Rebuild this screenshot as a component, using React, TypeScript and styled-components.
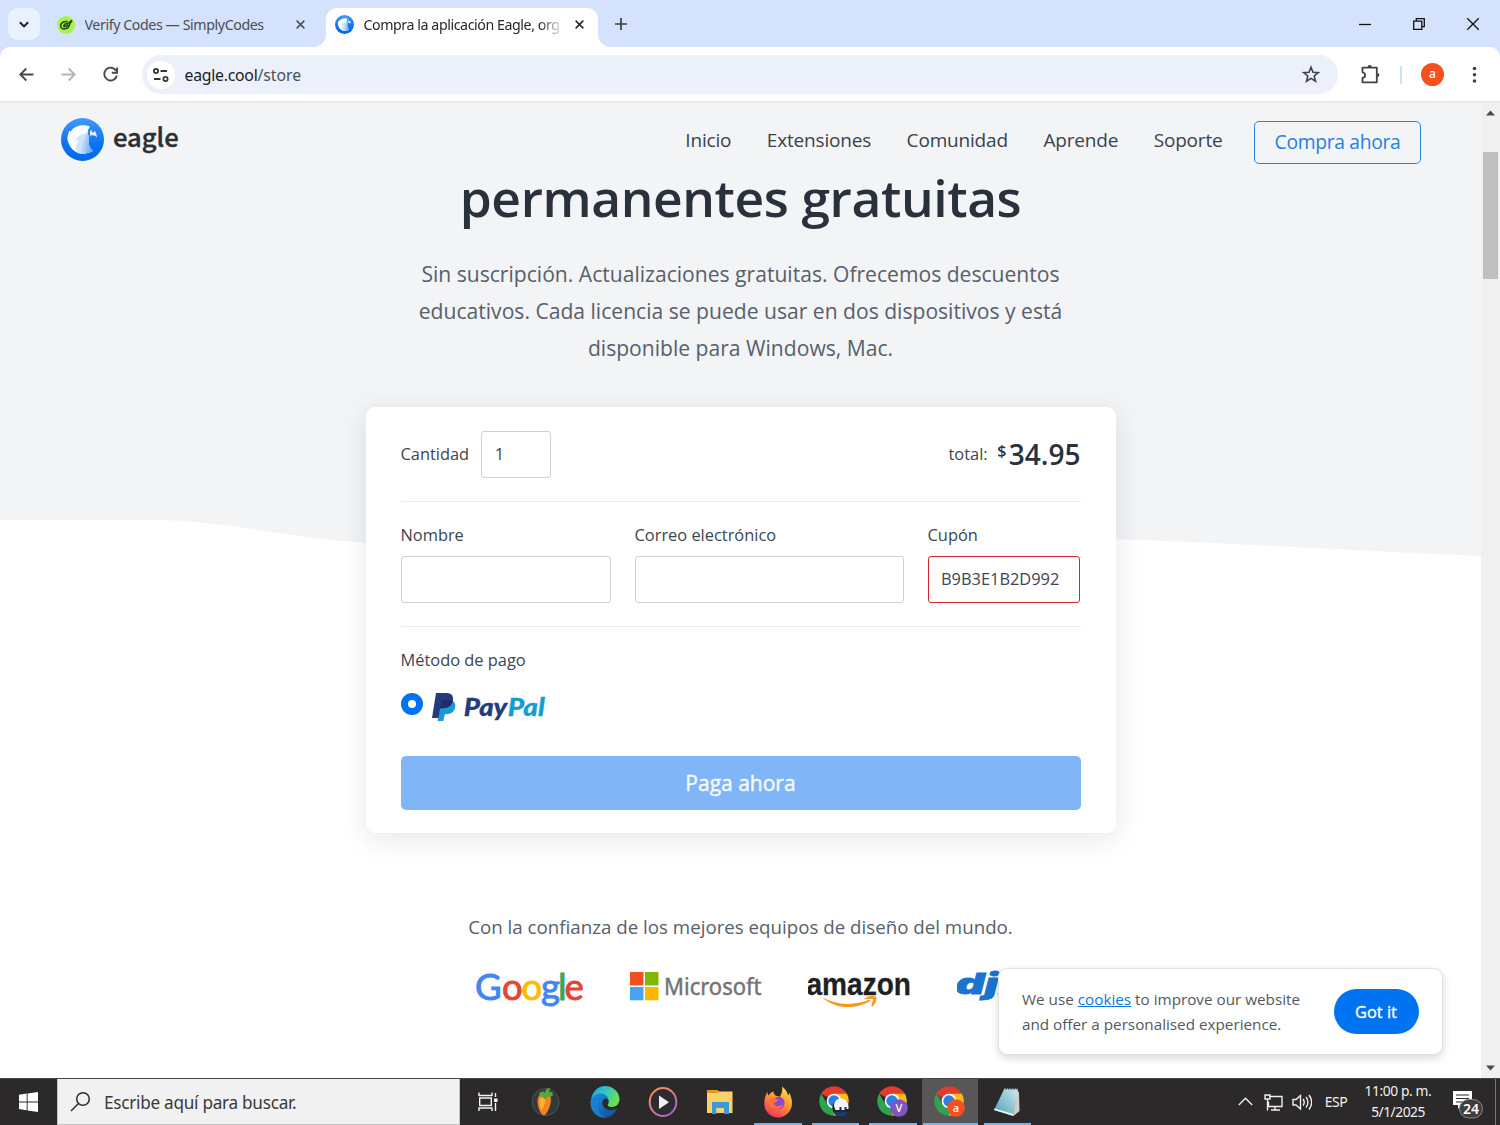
import React from "react";
import styled, { createGlobalStyle } from "styled-components";

const ui = `"Noto Sans", "Open Sans", sans-serif`;
const web = `"Open Sans", "Noto Sans", sans-serif`;

const Global = createGlobalStyle`
  * { box-sizing: border-box; }
  body { margin: 0; overflow: hidden; background: #fff; }
  svg { display: block; flex: none; }
  a { color: inherit; }
`;

const Screen = styled.div`
  width: 1500px;
  height: 1125px;
  display: flex;
  flex-direction: column;
  overflow: hidden;
  font-family: ${web};
`;

const Label = styled.span<{
  $size: number;
  $color?: string;
  $weight?: number;
  $track?: number;
  $ui?: boolean;
  $thicken?: number;
}>`
  font-family: ${(p) => (p.$ui ? ui : web)};
  font-size: ${(p) => p.$size}px;
  font-weight: ${(p) => p.$weight ?? 400};
  color: ${(p) => p.$color ?? "#3c4550"};
  letter-spacing: ${(p) => p.$track ?? 0}px;
  -webkit-text-stroke: ${(p) => p.$thicken ?? 0}px currentColor;
  white-space: nowrap;
`;

/* ---------- browser chrome ---------- */

const TabStrip = styled.div`
  height: 47px;
  flex: none;
  display: flex;
  align-items: stretch;
  background: #d4e2fd;
  padding-left: 8px;
`;

const TabSearch = styled.div`
  width: 32px;
  height: 32px;
  margin-top: 8px;
  border-radius: 10px;
  background: #e9f1fe;
  display: grid;
  place-items: center;
`;

const Tab = styled.div<{ $active?: boolean; $width: number }>`
  width: ${(p) => p.$width}px;
  margin-top: 8px;
  padding: 0 ${(p) => (p.$active ? 14 : 21)}px 6px ${(p) => (p.$active ? 9 : 17)}px;
  display: flex;
  align-items: center;
  gap: 9.5px;
  position: relative;
  border-radius: 11px 11px 0 0;
  background: ${(p) => (p.$active ? "#fff" : "transparent")};
  ${(p) =>
    p.$active &&
    `&::before, &::after {
      content: "";
      position: absolute;
      bottom: 0;
      width: 12px;
      height: 12px;
    }
    &::before { left: -12px; background: radial-gradient(circle at 0 0, transparent 11.5px, #fff 12px); }
    &::after { right: -12px; background: radial-gradient(circle at 100% 0, transparent 11.5px, #fff 12px); }`}
`;

const TabTitle = styled.div<{ $width: number; $fade?: boolean }>`
  width: ${(p) => p.$width}px;
  margin-right: auto;
  overflow: hidden;
  white-space: nowrap;
  line-height: 22px;
  display: flex;
  ${(p) => p.$fade && `mask-image: linear-gradient(90deg, #000 90%, rgba(0, 0, 0, 0.2) 100%);`}
`;

const NewTab = styled.div`
  width: 24px;
  margin-left: 11px;
  display: grid;
  place-items: center;
`;

const WindowButtons = styled.div`
  margin-left: auto;
  display: grid;
  grid-template-columns: repeat(3, 54px);
  place-items: center;
`;

const ToolbarBack = styled.div`
  background: #d4e2fd;
  flex: none;
  position: relative;
  z-index: 1;
`;

const Toolbar = styled.div`
  height: 55px;
  display: flex;
  align-items: center;
  background: #fff;
  border-radius: 10px 10px 0 0;
  box-shadow: inset 0 -1px 0 #e4e5e6, 0 0.5px 0 #e4e5e6;
  padding: 0 16px 0 17px;
`;

const NavButtons = styled.div`
  display: flex;
  gap: 22px;
  width: 125px;
`;

const AddressBar = styled.div`
  width: 1196px;
  height: 39px;
  border-radius: 20px;
  background: #ebf0fa;
  display: flex;
  align-items: center;
  padding: 0 17px 0 5px;
`;

const SiteChip = styled.div`
  width: 28px;
  height: 28px;
  border-radius: 50%;
  background: #fff;
  display: grid;
  place-items: center;
  margin-right: 9.5px;
`;

const Spacer = styled.div`
  flex: 1;
`;

const ToolbarEnd = styled.div`
  flex: 1;
  display: flex;
  align-items: center;
  justify-content: flex-end;
`;

const Separator = styled.i`
  width: 2px;
  height: 18px;
  background: #cfe0fb;
  margin: 0 19px;
`;

const Avatar = styled.div`
  width: 23px;
  height: 23px;
  border-radius: 50%;
  background: #f4511e;
  color: #fff;
  font: 500 12px/22px ${ui};
  text-align: center;
  margin-right: 20px;
`;

/* ---------- page ---------- */

const Viewport = styled.div`
  flex: 1;
  min-height: 0;
  display: flex;
`;

const Page = styled.main`
  width: 1481px;
  flex: none;
  position: relative;
  z-index: 0;
  display: flex;
  flex-direction: column;
  align-items: center;
  overflow: hidden;
`;

const Backdrop = styled.svg`
  position: absolute;
  inset: 0;
  z-index: -1;
`;

const Header = styled.header`
  width: 100%;
  height: 64px;
  flex: none;
  padding: 15.5px 60px 0 61px;
  display: flex;
  align-items: flex-start;
`;

const Brand = styled.div`
  display: flex;
  gap: 9px;
  font: 500 25.6px/35px "Noto Sans CJK SC", sans-serif;
  -webkit-text-stroke: 0.4px #2c2e31;
  color: #2c2e31;
`;

const Menu = styled.nav`
  margin-left: auto;
  display: flex;
  align-items: center;
  gap: 35.5px;
  line-height: 44px;
`;

const BuyButton = styled.button`
  width: 167px;
  height: 43px;
  margin: 3px 0 0 31.5px;
  padding: 1px 0 0;
  background: transparent;
  border: 1.5px solid #2b83e6;
  border-radius: 5px;
  line-height: 38px;
`;

const Heading = styled.h1`
  margin: 0;
  font-size: 51.5px;
  font-weight: 600;
  line-height: 63px;
  height: 64px;
  letter-spacing: -0.4px;
  color: #29323c;
`;

const Intro = styled.p`
  margin: 25px 0 0;
  height: 152px;
  flex: none;
  line-height: 37px;
  display: flex;
  flex-direction: column;
  align-items: center;
`;

const Card = styled.section`
  width: 750px;
  height: 426px;
  flex: none;
  padding: 24px 35px;
  background: #fff;
  border-radius: 9px;
  box-shadow: 0 6px 28px rgba(30, 35, 45, 0.11);
`;

const QuantityRow = styled.div`
  display: flex;
  align-items: center;
  height: 71px;
  padding-bottom: 25px;
  border-bottom: 1px solid #e9eaec;
`;

const Field = styled.div<{ $width: number; $error?: boolean }>`
  width: ${(p) => p.$width}px;
  height: 47px;
  border: 1px solid ${(p) => (p.$error ? "#d62433" : "#cfd2d5")};
  border-radius: 3px;
  padding: 0 12.5px 1.5px;
  display: flex;
  align-items: center;
`;

const QuantityBox = styled.div`
  margin: 2px auto 0 12px;
`;

const Price = styled.div`
  display: flex;
  align-items: center;
  height: 46px;
  margin-left: 9.5px;
`;

const Currency = styled.div`
  align-self: flex-start;
  margin: 9px 2.5px 0 0;
  line-height: 22px;
`;

const FieldsRow = styled.div`
  display: flex;
  gap: 24px;
  height: 125px;
  padding-top: 21px;
  border-bottom: 1px solid #e9eaec;
`;

const FieldGroup = styled.div`
  line-height: 24px;
  display: flex;
  flex-direction: column;
  gap: 9px;
`;

const Payment = styled.div`
  padding-top: 21px;
  line-height: 24px;
`;

const PayOption = styled.div`
  display: flex;
  gap: 9px;
  margin-top: 21px;
  height: 63px;
`;

const Radio = styled.span`
  width: 22px;
  height: 22px;
  border-radius: 50%;
  border: 7px solid #0072ef;
`;

const PayButton = styled.button`
  width: 680px;
  height: 54px;
  padding: 0 0 1px;
  border: 0;
  border-radius: 5px;
  background: #80b6f7;
`;

const Trust = styled.p`
  margin: 80px 0 0;
  line-height: 28px;
`;

const Logos = styled.div`
  display: flex;
  width: 530px;
  height: 44px;
  flex: none;
  margin-top: 26px;
`;

const CookieCard = styled.aside`
  position: absolute;
  left: 998px;
  top: 866px;
  width: 445px;
  height: 87px;
  padding: 0 23px;
  display: flex;
  align-items: center;
  justify-content: space-between;
  background: #fff;
  border: 1.5px solid #e0e1e3;
  border-radius: 9px;
  box-shadow: 0 3px 8px rgba(0, 0, 0, 0.16);
  line-height: 24.5px;
`;

const GotIt = styled.button`
  width: 85px;
  height: 45px;
  padding: 0 1px 1px 0;
  border: 0;
  border-radius: 23px;
  background: #0073f0;
`;

const CookieLink = styled.a`
  color: #0b78e3;
`;

const ScrollBar = styled.div`
  width: 19px;
  flex: none;
  background: #f0f0f0;
  display: flex;
  flex-direction: column;
  align-items: center;
  padding: 8px 0 7px;
`;

const Thumb = styled.div`
  width: 15px;
  height: 127px;
  margin: 35.5px 0 auto;
  background: #bfbfbf;
`;

/* ---------- taskbar ---------- */

const Taskbar = styled.footer`
  height: 47px;
  flex: none;
  display: flex;
  background: #2b2929;
  border-top: 1px solid #474545;
`;

const Start = styled.div`
  width: 57px;
  display: grid;
  place-items: center;
`;

const SearchBox = styled.div`
  width: 403px;
  background: #f1f1f1;
  border: 1px solid #c4c4c4;
  border-top: 0;
  display: flex;
  align-items: center;
  gap: 12px;
  padding: 1px 0 0 12px;
`;

const Slot = styled.div<{ $width?: number; $active?: boolean; $open?: boolean }>`
  width: ${(p) => p.$width ?? 57.5}px;
  display: grid;
  place-items: center;
  background: ${(p) => (p.$active ? "linear-gradient(#585657, #585657) center / 56px 100% no-repeat" : "none")};
  position: relative;
  ${(p) =>
    p.$open &&
    `&::after {
      content: "";
      position: absolute;
      bottom: 0;
      left: ${p.$active ? 1 : 5}px;
      right: ${p.$active ? 1 : 5}px;
      height: 2.5px;
      background: #76b3e6;
    }`}
`;

const Tray = styled.div`
  margin-left: auto;
  display: flex;
  align-items: center;
`;

const Language = styled.div`
  margin: -2px 0 0 13px;
`;

const Clock = styled.div`
  width: 80px;
  margin: -2px 14px 0 11px;
  display: flex;
  flex-direction: column;
  align-items: center;
  line-height: 21px;
`;

const Notify = styled.div`
  margin: 5px 11px 0 0;
`;

const DesktopEdge = styled.i`
  width: 1px;
  height: 100%;
  background: #777;
  margin-right: 4px;
`;

/* ---------- drawings ---------- */

const Cross = ({ color, size = 10 }: { color: string; size?: number }) => (
  <svg width={size} height={size} viewBox="0 0 10 10" stroke={color} strokeWidth="1.7">
    <path d="M.7.7l8.6 8.6M9.3.7L.7 9.3" />
  </svg>
);

const EagleMark = ({ size }: { size: number }) => (
  <svg width={size} height={size} viewBox="0 0 42 42">
    <defs>
      <linearGradient id="eagleRing" x1="0" y1="0" x2="0" y2="1">
        <stop offset="0" stopColor="#4597fb" />
        <stop offset="0.6" stopColor="#0a74f0" />
        <stop offset="1" stopColor="#0069e8" />
      </linearGradient>
      <linearGradient id="eagleWing" x1="0" y1=".3" x2="1" y2=".6">
        <stop offset="0" stopColor="#e2effe" />
        <stop offset="1" stopColor="#5aa3fb" />
      </linearGradient>
    </defs>
    <circle cx="21" cy="21" r="21" fill="url(#eagleRing)" />
    <path d="M6.500 17.300L8 12.500l1.500.6C12.500 8.800 17 7.100 22 7.100c2.500 0 4.500.5 6.300 1.500-2.600 3-3 6.500-.7 9.700-1.500 5.500-.4 11 3.600 13.500-7.500 5.600-18.500 3.200-22.600-4.800-1.600-3-2.900-6.100-2.100-9.700z" fill="#fff" />
    <path d="M26 14.500c-5.300.6-10 3.400-12.500 8.300l4.200-1c-3 3-4.300 8-1.800 12.500 5 .9 11.200-.3 15.200-2.400-3.800-3-5-8-3.600-13.400-.9-1.200-1.500-2.500-1.500-4z" fill="#cfe4fe" />
    <path d="M26 15.500c-5.500 3.500-8.200 11-7 19.200 4.500.4 9-.4 12.200-2.900-3.800-3-5-8-3.600-13.400-.8-.9-1.300-1.800-1.600-2.900z" fill="url(#eagleWing)" />
    <path d="M29.700 11c-1.800 2.300-2 4.600-1 6.300 2.600-.8 4.700-.2 6.400 1.700-.2-2.600-.9-5-2.300-6.900-.2 1.400-.8 2-1.700 1.800-1-.2-1.500-1.200-1.400-2.900z" fill="#e4f0ff" />
  </svg>
);

const ChromeIcon = ({ letter, color }: { letter?: string; color?: string }) => (
  <svg width="32" height="36" viewBox="0 0 32 36">
    <path d="M15 17L2.200 9.600A14.800 14.800 0 0 1 27.800 9.600z" fill="#e33b2e" />
    <path d="M15 17V9.700h12.900A14.800 14.800 0 0 1 15 31.800z" fill="#fbbc1a" />
    <path d="M15 31.800A14.800 14.800 0 0 1 2.200 9.600L8.500 20.500 15 24.300z" fill="#2ea44f" />
    <circle cx="15" cy="17" r="7.300" fill="#fff" />
    <circle cx="15" cy="17" r="5.700" fill="#2f7de9" />
    {letter ? (
      <>
        <circle cx="22" cy="24" r="8.800" fill={color} />
        <text x="22" y="27.800" textAnchor="middle" fontFamily="Noto Sans" fontSize="11" fill="#fff" fontWeight="500">
          {letter}
        </text>
      </>
    ) : (
      <>
        <circle cx="22" cy="24" r="8.700" fill="#1d2634" />
        <path d="M15 22c0-5 3-7.500 7-7.500s7.500 3 7.500 7.500v3h-2v-2h-2v3h-3v-3h-2v3h-4z" fill="#f4f4f6" />
        <path d="M15 28h14c-2 6-12 6-14 0z" fill="#173c6b" />
      </>
    )}
  </svg>
);

const FruityIcon = () => (
  <svg width="30" height="32" viewBox="0 0 30 32">
    <circle cx="14.500" cy="16" r="13.500" fill="#343a3c" stroke="#4a5557" strokeWidth="1" />
    <path d="M8 10c4-3 12-2 12 3 0 6-3 14-7 16.500-3-1-5-5-6-10-.6-4-.8-7.500 1-9.500z" fill="#f5811f" />
    <path d="M10 11c3-1 5 1 4 5-.8 4-2 6-3.500 8-2-4-3-10-.5-13z" fill="#ffb13a" />
    <path d="M8 8c2-3 5-3 6-1 0-3 2-5 5-5l-1 4c2-1 4 0 4 3-2 3-5 1-6 2-1 3-3 3-4 0-2 1-4-1-4-3z" fill="#5aa53a" />
  </svg>
);

const EdgeIcon = () => (
  <svg width="30" height="32" viewBox="0 0 30 32">
    <defs>
      <linearGradient id="edgeTop" x1="0" y1="0" x2="1" y2=".5">
        <stop offset="0" stopColor="#239bdc" />
        <stop offset=".5" stopColor="#31c3c9" />
        <stop offset="1" stopColor="#6de04b" />
      </linearGradient>
      <linearGradient id="edgeLow" x1="0" y1="0" x2="1" y2="1">
        <stop offset="0" stopColor="#1f92df" />
        <stop offset="1" stopColor="#124a94" />
      </linearGradient>
    </defs>
    <path d="M1 14C2 6 8 0 15 0c8 0 14.500 6 14.500 13 0 5-3.500 8-7.500 8-3 0-5-1.200-4-2.700 2.500-4-1-8-6-8-5 0-9 2-11 3.700z" fill="url(#edgeTop)" />
    <path d="M.6 16c.5-5 5-8.500 10-8.500 4.500 0 8 3 8 7-1-2-3-2.700-4.500-1.500-3 2.500-2 7.500 2 10 3.500 2 7.500 1.500 11-1-2 6-7 9.700-12.500 9.700C7 31.700.2 25 .6 16z" fill="url(#edgeLow)" />
    <path d="M10.500 13c-5 4-3 15 5 18.600-8 .6-15-6-15-14.600 0-5 5-7 10-4z" fill="#1a7ed4" opacity=".8" />
  </svg>
);

const PlayerIcon = () => (
  <svg width="30" height="32" viewBox="0 0 30 32">
    <defs>
      <linearGradient id="playRing" x1="0" y1="0" x2=".8" y2="1">
        <stop offset="0" stopColor="#f59149" />
        <stop offset=".5" stopColor="#df8080" />
        <stop offset="1" stopColor="#a35fd0" />
      </linearGradient>
    </defs>
    <ellipse cx="15" cy="16" rx="13.300" ry="14" fill="#2d2c33" stroke="url(#playRing)" strokeWidth="2" />
    <path d="M11 9.500v13.500l10-6.700z" fill="#f2f2f2" />
  </svg>
);

const FolderIcon = () => (
  <svg width="26" height="26" viewBox="0 0 26 26">
    <path d="M0 1h10l2 1.500h13.500V24H0z" fill="#f9d26b" />
    <path d="M0 1h10l1.500 3H0z" fill="#e09a1c" />
    <path d="M5 13h17v12h-5v-6H9.500v6H5z" fill="#3c98d6" />
    <path d="M9.500 19H17v5H9.500z" fill="#f9d26b" />
  </svg>
);

const FirefoxIcon = () => (
  <svg width="28" height="32" viewBox="0 0 28 32">
    <defs>
      <linearGradient id="foxFire" x1=".8" y1="0" x2=".3" y2="1">
        <stop offset="0" stopColor="#ffe14a" />
        <stop offset=".45" stopColor="#ff9a2a" />
        <stop offset="1" stopColor="#f5315f" />
      </linearGradient>
    </defs>
    <path d="M18 .5c4 3 5.500 6 6 9 1-1 1-2 1-3 2 3 3 7 3 11C28 25 22 31.500 14 31.500S0 25 .3 17c.1-4 1.200-8 3.200-11.500 0 2 .2 3 1 4C6 7 8 6 9.500 5.500c0 2 1 3.500 3 4.500 2 0 3 .5 3 1.500C17 9 19 5 18 .5z" fill="url(#foxFire)" />
    <circle cx="14.300" cy="17" r="6.300" fill="#8f45d8" />
    <path d="M6 13c3-2 6-1 8 1-1 2-3 2-4 3 0 4 6 4 9 1-1 6-10 7-13 1-.8-2-1-4 0-6z" fill="#ff7139" />
  </svg>
);

const NotepadIcon = () => (
  <svg width="28" height="29" viewBox="0 0 28 29">
    <defs>
      <linearGradient id="padSheet" x1="0" y1="1" x2="1" y2="0">
        <stop offset="0" stopColor="#4b9bb0" />
        <stop offset="1" stopColor="#c9e9ef" />
      </linearGradient>
    </defs>
    <path d="M22 2l4 2 .5 19-6 5z" fill="#d5cdc1" />
    <path d="M11 1.500h14L20.500 28 1 22z" fill="url(#padSheet)" />
    <path d="M1 22l19.500 6-.3-2L1.500 20.500z" fill="#e9f6f8" />
    <path d="M11 1.500h14" stroke="#bcc" strokeDasharray="1.500 1.200" strokeWidth="2" />
  </svg>
);

const PayPalLogo = () => (
  <svg width="116" height="32" viewBox="0 0 116 32">
    <path d="M9.500 8h11.500c2.200 1.500 2.800 4 2 7-1.100 4.200-4.200 6.200-8.500 6.200h-1.700L11.300 28H5.600z" fill="#179bd7" />
    <path d="M4 0h10.500c5 0 7.300 3 6.300 7.600-1.100 5.200-4.600 7.600-9.800 7.600H8.300L6.500 25H0z" fill="#253b80" />
    <path d="M9.600 7h11.300c-.7 5.700-4.400 8.200-9.900 8.200H8.300z" fill="#222d65" />
    <g fontFamily="Lato" fontWeight="900" fontStyle="italic" fontSize="24" strokeWidth=".3">
      <text x="31.800" y="22.700" textLength="43.500" lengthAdjust="spacingAndGlyphs" fill="#253b80" stroke="#253b80">Pay</text>
      <text x="75.800" y="22.700" textLength="37" lengthAdjust="spacingAndGlyphs" fill="#179bd7" stroke="#179bd7">Pal</text>
    </g>
  </svg>
);

const googleLetters = [
  { glyph: "G", x: -1, color: "#4285f4" },
  { glyph: "o", x: 26, color: "#ea4335" },
  { glyph: "o", x: 45.5, color: "#fbbc05" },
  { glyph: "g", x: 65, color: "#4285f4" },
  { glyph: "l", x: 82, color: "#34a853" },
  { glyph: "e", x: 88.5, color: "#ea4335" },
];

const GoogleLogo = () => (
  <svg width="154" height="44" viewBox="0 0 154 44">
    <text y="31.700" fontFamily="Lato" fontSize="36.500" strokeWidth=".9">
      {googleLetters.map(({ glyph, x, color }) => (
        <tspan key={x} x={x} fill={color} stroke={color}>{glyph}</tspan>
      ))}
    </text>
  </svg>
);

const MicrosoftLogo = () => (
  <svg width="178.500" height="44" viewBox="0 0 178.5 44">
    <path fill="#f25022" d="M0 4h13.500v13.500H0z" />
    <path fill="#7fba00" d="M15 4h13.500v13.500H15z" />
    <path fill="#4aa3f0" d="M0 19h13.500v13.300H0z" />
    <path fill="#fbb800" d="M15 19h13.500v13.300H15z" />
    <text x="34" y="27" fontFamily="Noto Sans" fontSize="24" textLength="97.500" lengthAdjust="spacingAndGlyphs" fill="#737373" stroke="#737373" strokeWidth=".45">
      Microsoft
    </text>
  </svg>
);

const AmazonLogo = () => (
  <svg width="149" height="44" viewBox="0 0 149 44">
    <text x="-1.500" y="27" fontFamily="Liberation Sans" fontWeight="700" fontSize="31.500" textLength="104.500" lengthAdjust="spacingAndGlyphs" fill="#221f1f" stroke="#221f1f" strokeWidth=".3">
      amazon
    </text>
    <path d="M13.500 28.500c14 9 32 9.500 48 3l.8 1.500C49 41.500 26.500 42 13.500 28.500z" fill="#f79a1c" />
    <path d="M56.500 30.500c4-3.200 8.300-3 12-1.800.2 4-1.300 7.800-4.300 10l-.9-.7 1.900-6.700c-2-1-5-.6-8.500.2z" fill="#f79a1c" />
  </svg>
);

const DjiLogo = () => (
  <svg width="60" height="44" viewBox="0 0 60 44">
    <text x="-1.500" y="26" fontFamily="Inter" fontWeight="900" fontStyle="italic" fontSize="28" textLength="56" lengthAdjust="spacingAndGlyphs" fill="#1a73cf" stroke="#1a73cf" strokeWidth=".8">
      dji
    </text>
  </svg>
);

const StartIcon = () => (
  <svg width="19" height="20" viewBox="0 0 19 20" fill="#fff">
    <path d="M0 2.700l7.700-1.100v7.800H0zM8.600 1.500L19 0v9.400H8.600zM0 10.400h7.700v7.800L0 17.100zM8.600 10.400H19V20L8.600 18.400z" />
  </svg>
);

const TaskViewIcon = () => (
  <svg width="20" height="20" viewBox="0 0 20 20" stroke="#f2f2f2" strokeWidth="1.400" fill="none">
    <path d="M1 .5v3h13v-3M1 19v-3h13v3M1.700 6h11.600v7.500H1.700zM17.500 1v4M17.500 11v8" />
    <path d="M16 6.500h3.500v3.500H16z" fill="#f2f2f2" stroke="none" />
  </svg>
);

const navItems = ["Inicio", "Extensiones", "Comunidad", "Aprende", "Soporte"];
const introLines = [
  "Sin suscripción. Actualizaciones gratuitas. Ofrecemos descuentos",
  "educativos. Cada licencia se puede usar en dos dispositivos y está",
  "disponible para Windows, Mac.",
];

const Browser = () => (
  <>
    <TabStrip>
      <TabSearch>
        <svg width="10" height="7" viewBox="0 0 10 7" fill="none" stroke="#202124" strokeWidth="2">
          <path d="M.8 1.200L5 5.400l4.200-4.200" />
        </svg>
      </TabSearch>
      <Tab $width={286}>
        <svg width="18" height="18" viewBox="0 0 18 18">
          <circle cx="9" cy="9" r="9" fill="#a5f545" />
          <path d="M10.500 5.600C6.500 5 3.600 7.200 3.600 9.800c0 2.400 2.200 3.400 4.400 3 2.600-.5 4.400-2.300 4.600-4.400l2.200-3.800-4.600 3c-1.500 0-3 .9-3.600 2.600 1.600.6 3.500-.2 4.600-1.700" fill="none" stroke="#24421d" strokeWidth="1.500" strokeLinejoin="round" />
        </svg>
        <TabTitle $width={190}>
          <Label $ui $size={14.2} $color="#4a4d52" $track={-0.4}>Verify Codes — SimplyCodes</Label>
        </TabTitle>
        <Cross color="#4b4e53" size={9} />
      </Tab>
      <Tab $active $width={272}>
        <EagleMark size={19} />
        <TabTitle $fade $width={195}>
          <Label $ui $size={14.2} $color="#26282b" $track={-0.42}>Compra la aplicación Eagle, org</Label>
        </TabTitle>
        <Cross color="#26282b" size={9} />
      </Tab>
      <NewTab>
        <svg width="12" height="12" viewBox="0 0 12 12" stroke="#3c4043" strokeWidth="1.700">
          <path d="M6 0v12M0 6h12" />
        </svg>
      </NewTab>
      <WindowButtons>
        <svg width="12" height="12" viewBox="0 0 12 12" stroke="#111" strokeWidth="1.300"><path d="M0 6.500h12" /></svg>
        <svg width="12" height="12" viewBox="0 0 12 12" stroke="#111" strokeWidth="1.300" fill="none">
          <path d="M.7 3.200h8.100v8.100H.7zM3.300 3V.7h8v8H9" />
        </svg>
        <svg width="12" height="12" viewBox="0 0 12 12" stroke="#111" strokeWidth="1.300"><path d="M.3.300l11.400 11.400M11.700.3L.3 11.700" /></svg>
      </WindowButtons>
    </TabStrip>
    <ToolbarBack>
      <Toolbar>
        <NavButtons>
          <svg width="20" height="20" viewBox="0 0 20 20" stroke="#45484c" strokeWidth="1.800" fill="none"><path d="M16.500 9.500H3.500M9.300 3.500l-6 6 6 6" /></svg>
          <svg width="20" height="20" viewBox="0 0 20 20" stroke="#b2b5b9" strokeWidth="1.800" fill="none"><path d="M2.500 9.500h13M9.700 3.500l6 6-6 6" /></svg>
          <svg width="20" height="20" viewBox="0 0 20 20" stroke="#45484c" strokeWidth="1.900" fill="none">
            <path d="M15.100 5.700A6.400 6.400 0 1 0 15.900 10.500M16.100 2.500v5.300h-5.300" />
          </svg>
        </NavButtons>
        <AddressBar>
          <SiteChip>
            <svg width="16" height="14" viewBox="0 0 16 14" stroke="#33363a" strokeWidth="1.800" fill="none">
              <circle cx="3" cy="3" r="2.100" /><path d="M7.500 3h6.500M1 11h6.500" /><circle cx="12.500" cy="11" r="2.100" />
            </svg>
          </SiteChip>
          <Label $ui $size={15.8} $color="#202124" $track={-0.25}>eagle.cool</Label>
          <Label $ui $size={15.8} $color="#4d5157" $track={-0.05}>/store</Label>
          <Spacer />
          <svg width="20" height="20" viewBox="0 0 20 20" stroke="#3f4246" strokeWidth="1.600" fill="none">
            <path d="M10 2.200l2 5 5.300.4-4.100 3.400 1.300 5.200L10 13.400l-4.500 2.800 1.300-5.200L2.700 7.600 8 7.200z" />
          </svg>
        </AddressBar>
        <ToolbarEnd>
          <svg width="22" height="22" viewBox="0 0 22 22" stroke="#3f4246" strokeWidth="1.800" fill="none">
            <path d="M3.500 3.700h14.300v14.600H3.500v-4.300c3.500-.5 3.500-5.200 0-5.700z" strokeLinejoin="round" />
            <path d="M8.600 3.200a2.100 2.100 0 0 1 4.200 0zM18.300 9a2.100 2.100 0 0 1 0 4.200z" fill="#3f4246" stroke="none" />
          </svg>
          <Separator />
          <Avatar>a</Avatar>
          <svg width="20" height="20" viewBox="0 0 20 20" fill="#3f4246">
            <circle cx="10.500" cy="3.500" r="1.800" /><circle cx="10.500" cy="9.800" r="1.800" /><circle cx="10.500" cy="16" r="1.800" />
          </svg>
        </ToolbarEnd>
      </Toolbar>
    </ToolbarBack>
  </>
);

const Store = () => (
  <Page>
    <Backdrop width="1481" height="976" viewBox="0 0 1481 976">
      <path d="M0 0H1481V454C1370 450 1240 441 1110 437L370 441C280 436 230 418 150 418H0z" fill="#f2f4f6" />
    </Backdrop>
    <Header>
      <Brand>
        <EagleMark size={43} />
        eagle
      </Brand>
      <Menu>
        {navItems.map((item) => (
          <Label key={item} $size={19} $color="#3a424b" $track={-0.18}>{item}</Label>
        ))}
      </Menu>
      <BuyButton>
        <Label $size={19.3} $color="#2480e4" $track={-0.33}>Compra ahora</Label>
      </BuyButton>
    </Header>
    <Heading>permanentes gratuitas</Heading>
    <Intro>
      {introLines.map((line) => (
        <Label key={line} $size={21.1} $color="#57606b">{line}</Label>
      ))}
    </Intro>
    <Card>
      <QuantityRow>
        <Label $size={16.4}>Cantidad</Label>
        <QuantityBox>
          <Field $width={70}><Label $size={16.4}>1</Label></Field>
        </QuantityBox>
        <Label $size={16.4}>total:</Label>
        <Price>
          <Currency><Label $size={16} $weight={600} $color="#29323c">$</Label></Currency>
          <Label $size={28} $weight={600} $color="#29323c">34.95</Label>
        </Price>
      </QuantityRow>
      <FieldsRow>
        <FieldGroup>
          <Label $size={16.4}>Nombre</Label>
          <Field $width={210} />
        </FieldGroup>
        <FieldGroup>
          <Label $size={16.4}>Correo electrónico</Label>
          <Field $width={269} />
        </FieldGroup>
        <FieldGroup>
          <Label $size={16.4}>Cupón</Label>
          <Field $width={152.5} $error><Label $size={16.4}>B9B3E1B2D992</Label></Field>
        </FieldGroup>
      </FieldsRow>
      <Payment>
        <Label $size={16.4}>Método de pago</Label>
        <PayOption>
          <Radio />
          <PayPalLogo />
        </PayOption>
        <PayButton><Label $size={21} $thicken={0.4} $color="#f5faff">Paga ahora</Label></PayButton>
      </Payment>
    </Card>
    <Trust><Label $size={18.73} $color="#57606b">Con la confianza de los mejores equipos de diseño del mundo.</Label></Trust>
    <Logos>
      <GoogleLogo />
      <MicrosoftLogo />
      <AmazonLogo />
      <DjiLogo />
    </Logos>
    <CookieCard>
      <div>
        <Label $size={15.25} $color="#54585d">We use <CookieLink href="#">cookies</CookieLink> to improve our website</Label>
        <br />
        <Label $size={15.25} $color="#54585d">and offer a personalised experience.</Label>
      </div>
      <GotIt><Label $size={16.4} $thicken={0.35} $color="#fff">Got it</Label></GotIt>
    </CookieCard>
  </Page>
);

const App = () => (
  <Screen>
    <Global />
    <Browser />
    <Viewport>
      <Store />
      <ScrollBar>
        <svg width="9" height="6" viewBox="0 0 9 6" fill="#4a4a4a"><path d="M0 5.500L4.500.5 9 5.500z" /></svg>
        <Thumb />
        <svg width="9" height="6" viewBox="0 0 9 6" fill="#4a4a4a"><path d="M0 .5l4.500 5 4.500-5z" /></svg>
      </ScrollBar>
    </Viewport>
    <Taskbar>
      <Start><StartIcon /></Start>
      <SearchBox>
        <svg width="22" height="22" viewBox="0 0 22 22" stroke="#2b2b2b" strokeWidth="1.500" fill="none">
          <circle cx="13" cy="8" r="6.300" /><path d="M8.500 12.500L1 20" />
        </svg>
        <Label $ui $size={17.2} $color="#3a3a3a" $track={-0.28}>Escribe aquí para buscar.</Label>
      </SearchBox>
      <Slot $width={56}><TaskViewIcon /></Slot>
      <Slot $width={60.7}><FruityIcon /></Slot>
      <Slot><EdgeIcon /></Slot>
      <Slot><PlayerIcon /></Slot>
      <Slot><FolderIcon /></Slot>
      <Slot $open><FirefoxIcon /></Slot>
      <Slot $open><ChromeIcon /></Slot>
      <Slot $open><ChromeIcon letter="V" color="#7e57c2" /></Slot>
      <Slot $open $active><ChromeIcon letter="a" color="#f4511e" /></Slot>
      <Slot $open $width={56.5}><NotepadIcon /></Slot>
      <Tray>
        <svg width="74" height="22" viewBox="0 0 74 22" stroke="#eee" strokeWidth="1.400" fill="none">
          <path d="M.8 14L7.500 7.300 14.200 14" />
          <path d="M31 5.500h13v10H30.500v-5M37 15.500v3.500M33 19h9M27 4h5v4h-5zM29.500 8v11.500" />
          <path d="M55 8.500h3l4.500-4v13.500l-4.500-4h-3zM65 8c1.500 2 1.500 4.500 0 6.500M68 6c2.500 3 2.500 7.500 0 10.500M71 4c3.300 4.500 3.300 10 0 14.500" />
        </svg>
        <Language><Label $ui $size={14} $color="#f2f2f2" $track={-0.6}>ESP</Label></Language>
        <Clock>
          <Label $ui $size={13.8} $color="#f2f2f2" $track={-0.4}>11:00 p. m.</Label>
          <Label $ui $size={13.8} $color="#f2f2f2" $track={-0.5}>5/1/2025</Label>
        </Clock>
        <Notify>
          <svg width="32" height="30" viewBox="0 0 32 30">
            <path d="M1 1h19v14H10l-4 4v-4H1z" fill="#fff" />
            <path d="M4 5h13M4 8.500h13M4 12h10" stroke="#2b2929" strokeWidth="1.200" />
            <rect x="7.500" y="9.500" width="23" height="18.500" rx="9.200" fill="#3f3d3d" stroke="#8a8a8a" />
            <text x="19" y="24.200" textAnchor="middle" fontFamily="Noto Sans" fontWeight="600" fontSize="14" fill="#fff">24</text>
          </svg>
        </Notify>
        <DesktopEdge />
      </Tray>
    </Taskbar>
  </Screen>
);

export default App;
